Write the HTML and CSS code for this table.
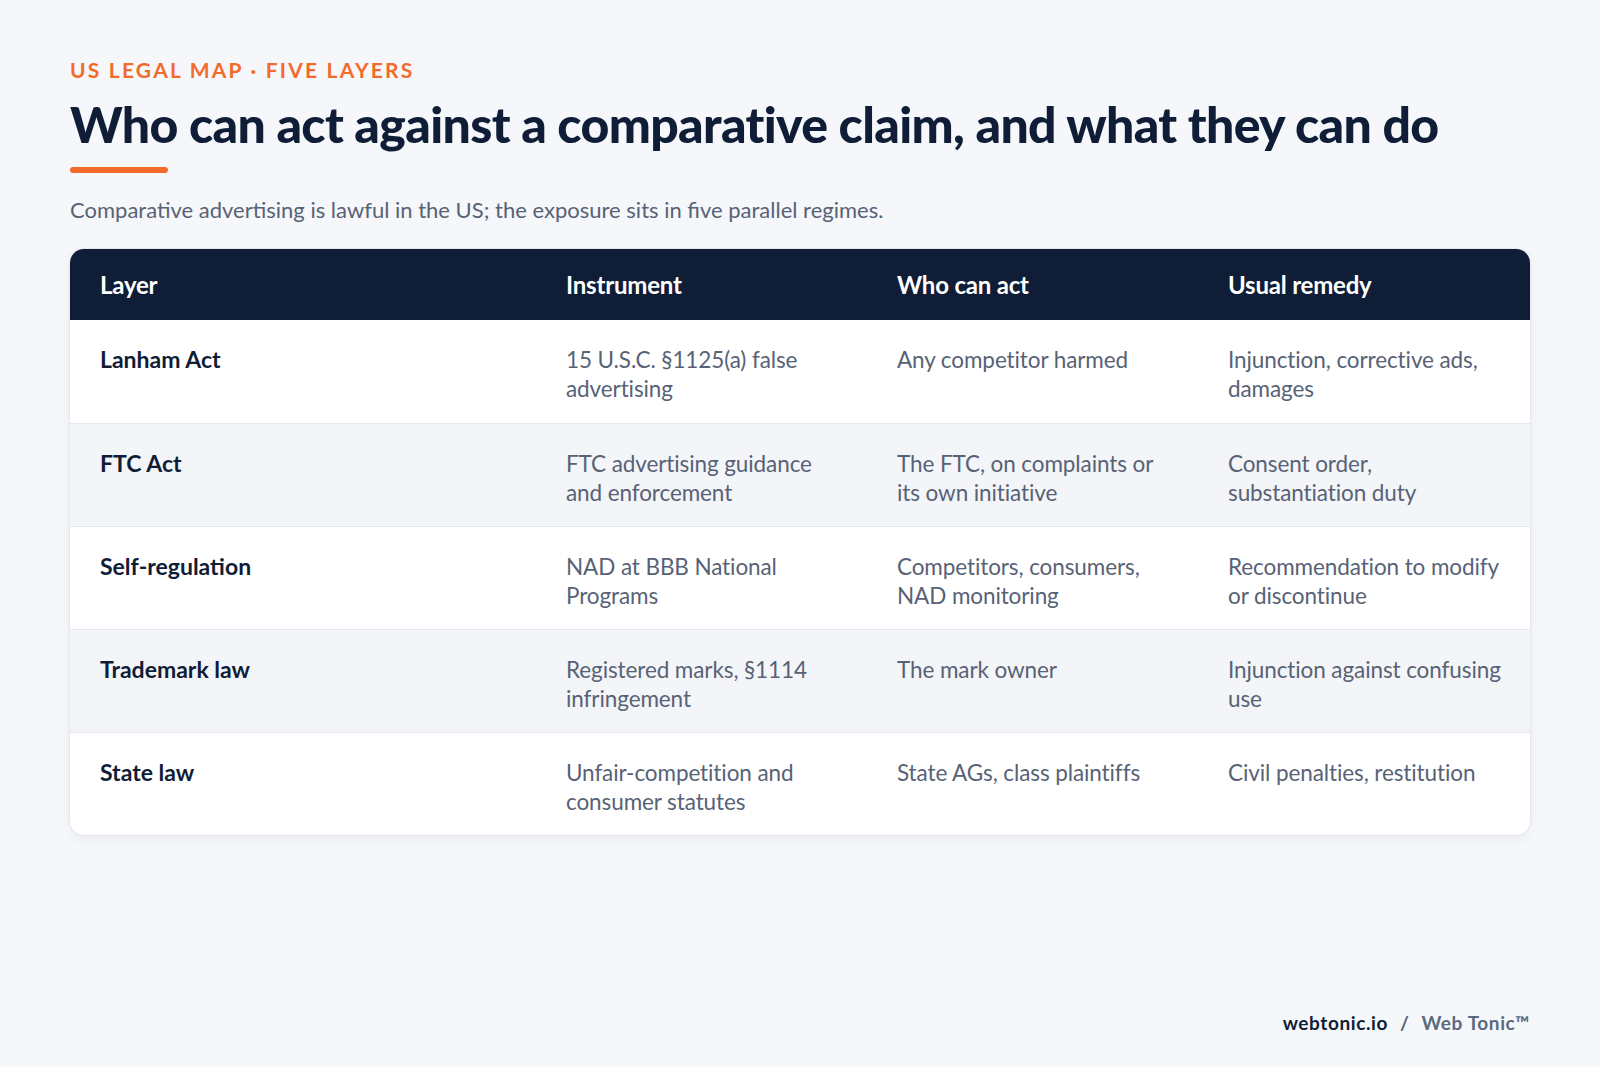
FILE: index.html
```html
<!DOCTYPE html>
<html lang="en">
<head>
<meta charset="utf-8">
<title>US Legal Map</title>
<link rel="stylesheet" href="styles.css">
</head>
<body>
<main class="page">
  <div class="eyebrow">US LEGAL MAP · FIVE LAYERS</div>
  <h1 class="title">Who can act against a comparative claim, and what they can do</h1>
  <div class="rule"></div>
  <p class="lede">Comparative advertising is lawful in the US; the exposure sits in five parallel regimes.</p>
  <table class="grid">
    <colgroup>
      <col class="w1"><col class="w2"><col class="w2"><col class="w3">
    </colgroup>
    <thead>
      <tr><th>Layer</th><th>Instrument</th><th>Who can act</th><th>Usual remedy</th></tr>
    </thead>
    <tbody>
      <tr><td class="c1">Lanham Act</td><td>15 U.S.C. §1125(a) false advertising</td><td>Any competitor harmed</td><td>Injunction, corrective ads, damages</td></tr>
      <tr><td class="c1">FTC Act</td><td>FTC advertising guidance and enforcement</td><td>The FTC, on complaints or its own initiative</td><td>Consent order, substantiation duty</td></tr>
      <tr><td class="c1">Self-regulation</td><td>NAD at BBB National Programs</td><td>Competitors, consumers, NAD monitoring</td><td>Recommendation to modify or discontinue</td></tr>
      <tr><td class="c1">Trademark law</td><td>Registered marks, §1114 infringement</td><td>The mark owner</td><td>Injunction against confusing use</td></tr>
      <tr><td class="c1">State law</td><td>Unfair-competition and consumer statutes</td><td>State AGs, class plaintiffs</td><td>Civil penalties, restitution</td></tr>
    </tbody>
  </table>
  <footer class="foot"><span class="brand">webtonic.io</span><span class="sep">/</span><span class="mark">Web Tonic™</span></footer>
</main>
</body>
</html>
```
FILE: styles.css
```css
html, body { margin: 0; padding: 0; }
body {
  background: #f5f7fa;
  font-family: Lato, "Noto Sans", sans-serif;
  color: #0f1d36;
  width: 1600px;
  height: 1067px;
  overflow: hidden;
}
.page {
  padding: 58px 70px 0 70px;
  height: 1067px;
  box-sizing: border-box;
  display: flex;
  flex-direction: column;
}
.eyebrow {
  color: #f26b2b;
  font-weight: 700;
  font-size: 21px;
  letter-spacing: 2.2px;
  line-height: 24px;
}
.title {
  margin: 12px 0 0 0;
  font-weight: 900;
  font-size: 50px;
  line-height: 60px;
  letter-spacing: -0.65px;
  color: #0f1d36;
}
.rule {
  width: 98px;
  height: 6px;
  border-radius: 3px;
  background: #f26b2b;
  margin-top: 13px;
}
.lede {
  margin: 23px 0 0 0;
  font-size: 22px;
  line-height: 28px;
  color: #586276;
}
.grid {
  margin-top: 25px;
  width: 1460px;
  border-collapse: separate;
  border-spacing: 0;
  background: #fff;
  border-radius: 14px;
  box-shadow: 0 0 0 1px #e4e8ee, 0 4px 12px rgba(15, 29, 54, 0.05);
  overflow: hidden;
  table-layout: fixed;
}
.w1 { width: 466px; }
.w2 { width: 331px; }
.w3 { width: 332px; }
.grid th {
  background: #0f1d36;
  color: #fff;
  text-align: left;
  font-weight: 700;
  font-size: 24px;
  height: 71px;
  padding: 0 24px 0 30px;
  vertical-align: middle;
  letter-spacing: -0.2px;
}
.grid td {
  font-size: 22.5px;
  line-height: 29px;
  color: #586276;
  vertical-align: top;
  padding: 25px 20px 0 30px;
  height: 77px;
  border-top: 1px solid #e4e8ee;
  letter-spacing: -0.1px;
}
.grid tbody tr:first-child td { border-top: none; height: 78px; }
.grid tbody tr:nth-child(even) td { background: #f3f5f8; }
.grid td.c1 { color: #0f1d36; font-weight: 700; font-size: 23px; letter-spacing: 0; }
.foot {
  margin-top: auto;
  margin-bottom: 32px;
  align-self: flex-end;
  font-size: 19px;
  font-weight: 700;
  letter-spacing: 0.6px;
  line-height: 24px;
}
.brand { color: #0f1d36; }
.sep { color: #586276; margin: 0 12px; }
.mark { color: #5a6a80; }
```
